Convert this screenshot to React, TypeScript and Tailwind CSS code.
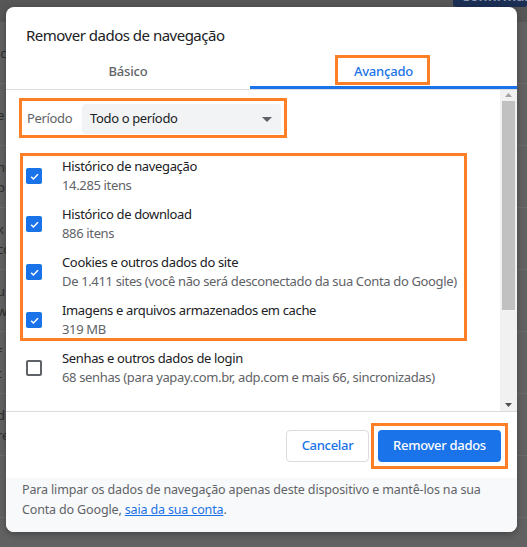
import React from "react";

const font = { fontFamily: '"Noto Sans", "Open Sans", Arial, sans-serif' };

function Check({ on }: { on: boolean }) {
  if (on)
    return (
      <div className="w-4 h-4 rounded-[2px] bg-[#1a73e8] flex items-center justify-center shrink-0">
        <svg width="11" height="11" viewBox="0 0 12 12">
          <path d="M2.3 6.3 L4.8 8.7 L9.8 3.5" fill="none" stroke="white" strokeWidth="1.6" />
        </svg>
      </div>
    );
  return <div className="w-4 h-4 rounded-[2px] border-2 border-[#5f6368] shrink-0" />;
}

const items = [
  { t: "Histórico de navegação", s: "14.285 itens", on: true },
  { t: "Histórico de download", s: "886 itens", on: true },
  { t: "Cookies e outros dados do site", s: "De 1.411 sites (você não será desconectado da sua Conta do Google)", on: true },
  { t: "Imagens e arquivos armazenados em cache", s: "319 MB", on: true },
  { t: "Senhas e outros dados de login", s: "68 senhas (para yapay.com.br, adp.com e mais 66, sincronizadas)", on: false },
];

const bgRows = ["ic", "e", "nc|p", "k|cc", "u|w", "f|t", "d|re", "", ""];

export default function App() {
  return (
    <div className="relative w-[527px] h-[547px] overflow-hidden bg-[#5a5a5a]" style={font}>
      {/* dimmed page behind */}
      <div className="flex flex-col text-[#2e2e2e] text-[13px]">
        <div className="h-[22px] bg-[#565656]" />
        {bgRows.map((r, i) => (
          <div key={i} className="h-[62px] border-b border-[#6b6b6b] flex flex-col justify-center bg-[#616161]">
            {r.split("|").map((p, j) => (
              <div key={j} className="leading-[20px] -ml-[3px]">{p}</div>
            ))}
          </div>
        ))}
      </div>
      <div className="absolute right-0 top-[-14px] w-[74px] h-[21px] bg-[#1b2f55] rounded-[3px] text-[#8b98b0] text-[14px] font-semibold pl-[8px] leading-[20px]">
        Confirmar
      </div>

      {/* dialog */}
      <div className="absolute left-[6px] top-[7px] w-[511px] h-[525px] bg-white rounded-[8px] overflow-hidden flex flex-col shadow-[0_2px_6px_rgba(0,0,0,0.3)]">
        <div className="h-[48px] pl-[20px] pt-[18px] text-[15px] tracking-[-0.5px] text-[#202124] leading-[20px]">
          Remover dados de navegação
        </div>
        <div className="flex h-[35px] border-b border-[#dadce0] text-[13px] tracking-[-0.2px] font-medium">
          <div className="w-[244px] flex items-center justify-center text-[#5f6368]">Básico</div>
          <div className="flex-1 flex items-center justify-center text-[#1a73e8] border-b-[3px] border-[#1a73e8] pt-[3px]">
            Avançado
          </div>
        </div>
        <div className="flex h-[322px] border-b border-[#dadce0]">
          <div className="flex-1 flex flex-col pt-[14px] tracking-[-0.35px]">
            <div className="flex items-center h-[30px]">
              <div className="w-[76px] pl-[21px] text-[13px] text-[#5f6368]">Período</div>
              <div className="w-[199px] h-[30px] bg-[#f1f3f4] rounded-[4px] flex items-center justify-between pl-[8px] pr-[9px] text-[13px] text-[#202124]">
                <span>Todo o período</span>
                <svg width="10" height="5" viewBox="0 0 10 5"><path d="M0 0 L10 0 L5 5 Z" fill="#5f6368" /></svg>
              </div>
            </div>
            <div className="mt-[18px] flex flex-col">
              {items.map((it, i) => (
                <div key={i} className="h-[48px] flex items-center">
                  <div className="w-[56px] pl-[20px]">
                    <Check on={it.on} />
                  </div>
                  <div className="flex flex-col text-[13px] leading-[19px] -mt-[1px]">
                    <span className="text-[#202124]">{it.t}</span>
                    <span className="text-[#5f6368]">{it.s}</span>
                  </div>
                </div>
              ))}
            </div>
          </div>
          <div className="w-[17px] bg-[#f1f1f1] flex flex-col items-center">
            <svg className="mt-[3px]" width="7" height="4" viewBox="0 0 7 4"><path d="M0 4 L7 4 L3.5 0 Z" fill="#a3a3a3" /></svg>
            <div className="mt-[4px] w-[13px] h-[209px] bg-[#c1c1c1]" />
            <div className="flex-1" />
            <svg className="mb-[4px]" width="7" height="4" viewBox="0 0 7 4"><path d="M0 0 L7 0 L3.5 4 Z" fill="#505050" /></svg>
          </div>
        </div>
        <div className="flex justify-end gap-[9px] pr-[16px] pt-[18px] h-[66px] tracking-[-0.3px]">
          <button className="w-[83px] h-[32px] rounded-[4px] border border-[#dadce0] bg-white text-[#1a73e8] text-[13px] font-medium">
            Cancelar
          </button>
          <button className="w-[123px] h-[32px] rounded-[4px] bg-[#1a73e8] text-white text-[13px] font-medium">
            Remover dados
          </button>
        </div>
        <div className="flex-1 bg-[#f8f9fa] px-[16px] pt-[2px] text-[12.5px] tracking-[-0.15px] leading-[20px] text-[#5f6368]">
          <p>
            Para limpar os dados de navegação apenas deste dispositivo e mantê-los na sua Conta do Google,{" "}
            <a className="text-[#1a73e8] underline">saia da sua conta</a>.
          </p>
        </div>

        {/* annotation boxes */}
        <div className="absolute left-[329px] top-[48px] w-[95px] h-[30px] border-[3px] border-[#ff7f27]" />
        <div className="absolute left-[13px] top-[91px] w-[268px] h-[40px] border-[3px] border-[#ff7f27]" />
        <div className="absolute left-[14px] top-[146px] w-[447px] h-[188px] border-[3px] border-[#ff7f27]" />
        <div className="absolute left-[365px] top-[416px] w-[137px] h-[46px] border-[3px] border-[#ff7f27]" />
      </div>
    </div>
  );
}
